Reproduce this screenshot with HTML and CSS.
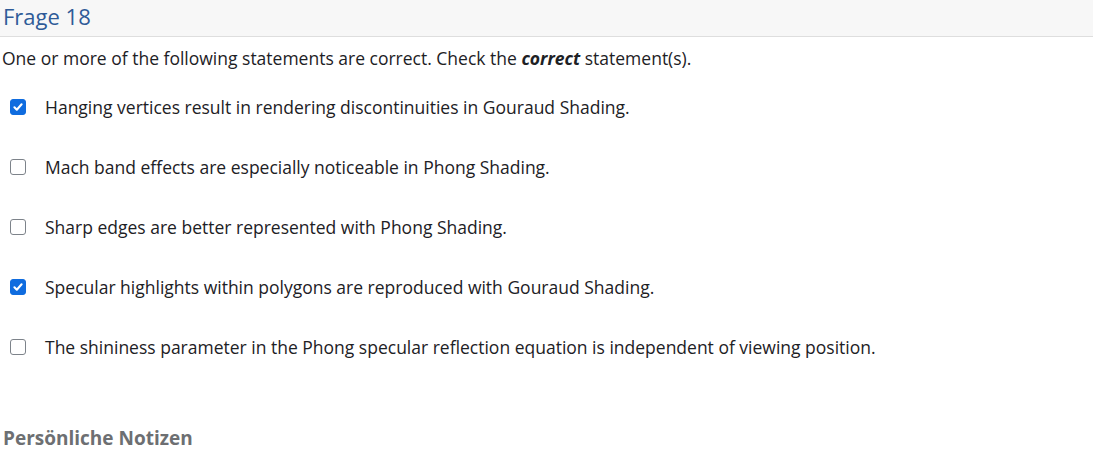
FILE: index.html
```html
<!DOCTYPE html>
<html>
<head>
<meta charset="utf-8">
<link rel="stylesheet" href="styles.css">
</head>
<body>
<div class="header"><h2 class="title">Frage 18</h2></div>
<p class="intro">One or more of the following statements are correct. Check the <em>correct</em> statement(s).</p>
<div class="options">
  <label class="opt"><input type="checkbox" checked><span>Hanging vertices result in rendering discontinuities in Gouraud Shading.</span></label>
  <label class="opt"><input type="checkbox"><span>Mach band effects are especially noticeable in Phong Shading.</span></label>
  <label class="opt"><input type="checkbox"><span>Sharp edges are better represented with Phong Shading.</span></label>
  <label class="opt"><input type="checkbox" checked><span>Specular highlights within polygons are reproduced with Gouraud Shading.</span></label>
  <label class="opt"><input type="checkbox"><span>The shininess parameter in the Phong specular reflection equation is independent of viewing position.</span></label>
</div>
<h3 class="notes">Persönliche Notizen</h3>
</body>
</html>
```
FILE: styles.css
```css
* { box-sizing: border-box; }
body {
  margin: 0;
  font-family: "Open Sans", sans-serif;
  color: #1d2125;
  background: #fff;
  font-size: 17.5px;
}
.header {
  background: #f7f7f7;
  border-bottom: 1px solid #dedede;
  height: 37px;
  width: 1093px;
  padding: 1px 0 0 3px;
}
.title {
  margin: 0;
  font-weight: 400;
  font-size: 22px;
  line-height: 30px;
  color: #2f5b98;
}
.intro {
  margin: 9px 0 0 2px;
  line-height: 24px;
}
.intro em {
  font-weight: 700;
}
.options {
  display: flex;
  flex-direction: column;
  gap: 36px;
  margin-top: 25px;
}
.opt {
  display: flex;
  align-items: center;
  height: 24px;
  padding-left: 10px;
}
.opt input {
  appearance: none;
  margin: 0 19px 0 0;
  width: 16px;
  height: 16px;
  border: 1.5px solid #7d838a;
  border-radius: 3px;
  background: #fff;
  flex: none;
}
.opt input:checked {
  background: #0f6cdf center / 12px 12px no-repeat url("data:image/svg+xml,%3Csvg xmlns='http://www.w3.org/2000/svg' viewBox='0 0 20 20'%3E%3Cpath fill='none' stroke='%23fff' stroke-linecap='round' stroke-linejoin='round' stroke-width='3.5' d='M4 10.5l4 4 8-9'/%3E%3C/svg%3E");
  border-color: #0f6cdf;
}
.notes {
  margin: 67px 0 0 3px;
  font-size: 19px;
  line-height: 24px;
  font-weight: 700;
  color: #6d6f72;
}
```
